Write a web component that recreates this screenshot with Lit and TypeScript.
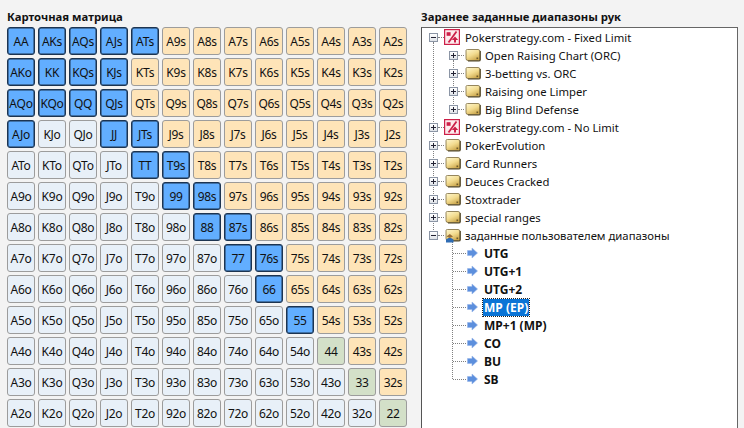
import { LitElement, html, css, svg } from "lit";
import { customElement } from "lit/decorators.js";

const R = ["A","K","Q","J","T","9","8","7","6","5","4","3","2"];
const BLUE = new Set(["AA","AKs","AQs","AJs","ATs","AKo","KK","KQs","KJs","AQo","KQo","QQ","QJs","AJo","JJ","JTs","TT","T9s","99","98s","88","87s","77","76s","66","55"]);

function folder(badge = false) {
  return html`<svg class="ico" viewBox="0 0 16 16" width="16" height="16">
    <defs><linearGradient id="fg" x1="0" y1="0" x2="0.6" y2="1"><stop offset="0" stop-color="#fff8d0"/><stop offset=".55" stop-color="#f3dc90"/><stop offset="1" stop-color="#cda94f"/></linearGradient></defs>
    <path d="M1 3.5 Q1 2.5 2.5 2.5 H13 Q15 2.5 15 4.5 V12.5 Q15 13.5 13.5 13.5 H3 Q1 13.5 1 11.5 Z" fill="url(#fg)" stroke="#7b6a3c" stroke-width=".8"/>
    <path d="M15.2 4 V13 Q15.2 14 13.5 14 H3" fill="none" stroke="#4f4526" stroke-width="1.2"/>
    <rect x="11.5" y="10.5" width="1.6" height="1.6" fill="#6d5a2a"/>
    ${badge ? svg`<path d="M1 15.5 V12.5 L3.5 11 H6 L8.5 12.5 V15.5 Z" fill="#2f6cb4"/><path d="M1.5 9.5 L4.8 7 L8 9.5 L4.8 11 Z" fill="#9a7038"/>` : ""}
  </svg>`;
}
function pct() {
  return html`<svg class="ico pct" viewBox="0 0 16 16" width="16" height="16">
    <rect x="0.6" y="0.6" width="14.8" height="14.8" fill="#fdeaec" stroke="#cc1f48" stroke-width="1.2"/>
    <path d="M12.5 2.5 L4.5 13.5" stroke="#cc1f48" stroke-width="1.8"/>
    <rect x="2.6" y="3.2" width="4" height="3.6" fill="#cc1f48"/>
    <path d="M11 7.5 L14.2 11 H12 V13.6 H10 V11 H7.8 Z" fill="#cc1f48"/>
  </svg>`;
}
function arrow() {
  return html`<svg class="ico" viewBox="0 0 11 12" width="11" height="12">
    <path d="M0.5 3.5 H5 V1 L10.5 6 L5 11 V8.5 H0.5 Z" fill="#5c8fdd" stroke="#93b4e8" stroke-width=".6"/>
  </svg>`;
}
function exp(plus: boolean) {
  return html`<span class="exp">${plus ? html`<i class="v"></i>` : ""}<i class="h"></i></span>`;
}

@customElement("app-root")
export class AppRoot extends LitElement {
  static styles = css`
    :host { display: block; width: 744px; height: 428px; overflow: hidden; background: #f3f3f3; font-family: "Noto Sans", sans-serif; color: #000; }
    .page { display: flex; height: 428px; padding: 0 6px 0 7px; box-sizing: border-box; }
    .left { width: 414px; flex: none; display: flex; flex-direction: column; }
    .title { font-weight: bold; font-family: "Noto Sans", sans-serif; font-size: 11.3px; height: 27px; line-height: 33px; color: #111; }
    .grid { display: grid; grid-template-columns: repeat(13, 28px); grid-auto-rows: 28px; gap: 3px; }
    .cell { box-sizing: border-box; border: 1px solid #9c9c9c; border-radius: 3px; display: flex; align-items: center; justify-content: center; font-family: "Noto Sans", sans-serif; font-size: 12px; letter-spacing: -.25px; color: #111; }
    .s { background: #fee4b8; }
    .o { background: #e8f0f8; }
    .p { background: #d3e0c8; }
    .b { background: #62aeff; border: 1px solid #1d3450; box-shadow: inset 0 0 0 .5px #1d3450; }
    .right { flex: 1; display: flex; flex-direction: column; min-width: 0; }
    .tree { flex: 1; background: #fff; border-left: 1px solid #555; border-top: 1px solid #666; border-right: 1px solid #666; position: relative; }
    .row { height: 18px; display: flex; align-items: center; font-size: 11.3px; color: #111; white-space: nowrap; position: relative; }
    .l0 { padding-left: 7px; }
    .l1 { padding-left: 27px; }
    .leaf { padding-left: 45px; font-size: 12px; }
    .ico { flex: none; position: relative; }
    .pct { margin-left: -1px; margin-right: 1px; }
    .exp { width: 9px; height: 9px; margin-right: 7px; border: 1px solid #8b95a5; box-sizing: border-box; background: linear-gradient(#fff, #dfe3e8); position: relative; flex: none; }
    .exp .h { position: absolute; left: 1px; top: 3px; width: 5px; height: 1px; background: #223; }
    .exp .v { position: absolute; left: 3px; top: 1px; width: 1px; height: 5px; background: #223; }
    .lab { margin-left: 4px; }
    .leaf .lab { margin-left: 6px; font-weight: bold; }
    .leaf .sel { background: #0a74d6; color: #fff; outline: 1px dotted #222; margin-left: 5px; padding: 0 1px; height: 17px; line-height: 17px; }
    .conn { position: absolute; top: 9px; height: 0; border-top: 1px dotted #808080; }
    .l0 .conn { left: 16px; width: 6px; }
    .l1 .conn { left: 36px; width: 6px; }
    .leaf .conn { left: 31px; width: 13px; }
    .guide { position: absolute; width: 0; border-left: 1px dotted #808080; }
    .g1 { left: 11px; top: 14px; height: 190px; }
    .g2 { left: 31px; top: 32px; height: 46px; }
    .g3 { left: 30px; top: 214px; height: 137px; }
  `;

  cls(name: string, i: number, j: number) {
    if (BLUE.has(name)) return "b";
    if (i === j) return "p";
    return i < j ? "s" : "o";
  }

  render() {
    return html`<div class="page">
      <div class="left">
        <div class="title">Карточная матрица</div>
        <div class="grid">
          ${R.map((a, i) => R.map((b, j) => {
            const name = i === j ? a + b : i < j ? a + b + "s" : b + a + "o";
            return html`<div class="cell ${this.cls(name, i, j)}">${name}</div>`;
          }))}
        </div>
      </div>
      <div class="right">
        <div class="title">Заранее заданные диапазоны рук</div>
        <div class="tree">
          <i class="guide g1"></i><i class="guide g2"></i><i class="guide g3"></i>
          ${this.row("l0", false, pct(), "Pokerstrategy.com - Fixed Limit")}
          ${["Open Raising Chart (ORC)","3-betting vs. ORC","Raising one Limper","Big Blind Defense"].map(t => this.row("l1", true, folder(), t))}
          ${this.row("l0", true, pct(), "Pokerstrategy.com - No Limit")}
          ${["PokerEvolution","Card Runners","Deuces Cracked","Stoxtrader","special ranges"].map(t => this.row("l0", true, folder(), t))}
          ${this.row("l0", false, folder(true), "заданные пользователем диапазоны")}
          ${["UTG","UTG+1","UTG+2","MP (EP)","MP+1 (MP)","CO","BU","SB"].map(t => html`<div class="row leaf"><i class="conn"></i>${arrow()}<span class="lab ${t === "MP (EP)" ? "sel" : ""}">${t}</span></div>`)}
        </div>
      </div>
    </div>`;
  }

  row(level: string, plus: boolean, icon: unknown, text: string) {
    return html`<div class="row ${level}"><i class="conn"></i>${exp(plus)}${icon}<span class="lab">${text}</span></div>`;
  }
}
